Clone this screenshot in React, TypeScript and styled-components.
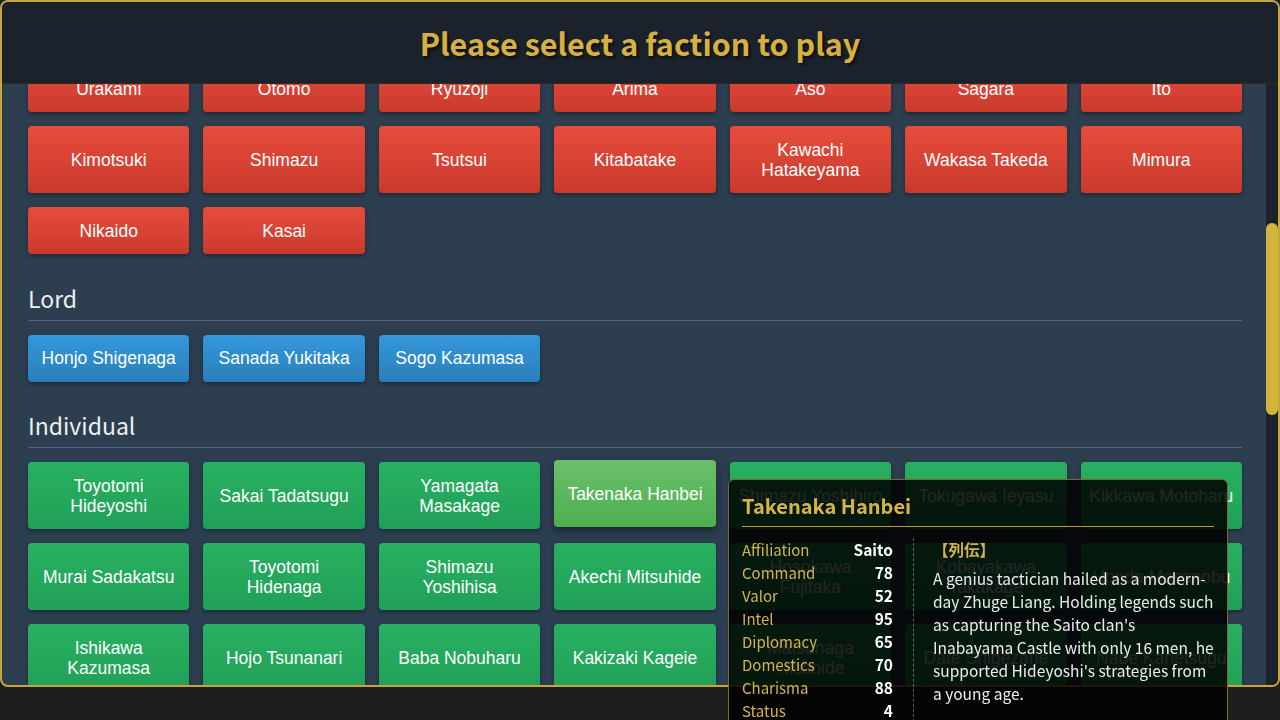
import React, { useLayoutEffect, useRef, useState } from "react";
import styled, { createGlobalStyle, css } from "styled-components";

type Tone = "red" | "blue" | "green";

const GlobalStyle = createGlobalStyle`
  html, body {
    margin: 0;
    padding: 0;
    height: 100%;
    overflow: hidden;
    background: #1f1e1d;
  }
  * {
    box-sizing: border-box;
  }
`;

const Frame = styled.div`
  height: 687px;
  display: flex;
  flex-direction: column;
  border: 2px solid #c9a63c;
  border-radius: 8px;
  overflow: hidden;
  background: #2c3e50;
`;

const Header = styled.header`
  height: 82px;
  flex-shrink: 0;
  display: flex;
  align-items: center;
  justify-content: center;
  background: #1b222c;
  border-bottom: 1px solid #2e2c22;
`;

const Title = styled.h1`
  margin: 2px 0 0;
  font: 700 30.5px/1 "Noto Sans CJK JP", "Noto Sans", sans-serif;
  color: #d6b13f;
  text-shadow: 2px 2px 3px rgba(0, 0, 0, 0.6);
`;

const Body = styled.div`
  flex: 1;
  min-height: 0;
  display: flex;
`;

const Scroller = styled.main`
  flex: 1;
  position: relative;
  overflow-y: auto;
  padding: 20px 24px 50px 26px;
  scrollbar-width: none;

  &::-webkit-scrollbar {
    display: none;
  }
`;

const Track = styled.div`
  width: 12px;
  flex-shrink: 0;
  background: #1b222c;
`;

const Thumb = styled.div`
  width: 12px;
  border-radius: 6px;
  background: #d4b53b;
`;

const Section = styled.section`
  & + & {
    margin-top: 27.5px;
  }
`;

const SectionTitle = styled.h2`
  margin: 0 0 14px;
  padding-bottom: 6px;
  border-bottom: 1px solid #566577;
  font: 400 23px/32px "Noto Sans CJK JP", "Noto Sans", sans-serif;
  color: #ecf0f1;
`;

const Grid = styled.div`
  display: grid;
  grid-template-columns: repeat(7, 1fr);
  gap: 14px;
`;

const tones = {
  red: css`
    background: linear-gradient(180deg, #e74c3c 0%, #c93a2c 100%);
  `,
  blue: css`
    background: linear-gradient(180deg, #3498db 0%, #2a7fba 100%);
  `,
  green: css`
    background: linear-gradient(180deg, #28b062 0%, #21a057 100%);
  `,
};

const FactionButton = styled.button<{ $tone: Tone; $active?: boolean }>`
  border: none;
  border-radius: 4px;
  padding: 13.5px 8px;
  font: 400 17.5px/20px "Liberation Sans", Arial, sans-serif;
  color: #ffffff;
  text-align: center;
  cursor: pointer;
  box-shadow: 0 2px 4px rgba(0, 0, 0, 0.35);
  ${(p) => tones[p.$tone]}
  ${(p) =>
    p.$active &&
    css`
      background: linear-gradient(180deg, #6cc06b 0%, #4caf50 100%);
      transform: translateY(-2px);
      box-shadow: 0 4px 8px rgba(0, 0, 0, 0.4);
    `}
`;

const Tip = styled.aside`
  position: fixed;
  left: 728px;
  top: 479px;
  width: 500px;
  padding: 12px 13px 16px;
  background: rgba(0, 0, 0, 0.86);
  border: 1px solid #7d6a2c;
  border-radius: 6px;
  font-family: "Noto Sans CJK JP", "Noto Sans", sans-serif;
  z-index: 10;
`;

const TipTitle = styled.div`
  font-size: 20px;
  line-height: 28px;
  font-weight: 700;
  color: #d8b443;
  padding-bottom: 6px;
  border-bottom: 1px solid #b8963a;
  margin-bottom: 11px;
`;

const TipBody = styled.div`
  display: flex;
`;

const Stats = styled.div`
  width: 172px;
  flex-shrink: 0;
  padding-right: 20px;
  border-right: 1px dashed rgba(255, 255, 255, 0.35);
`;

const StatRow = styled.div`
  display: flex;
  justify-content: space-between;
  font-size: 15px;
  line-height: 23px;
`;

const StatLabel = styled.span`
  color: #d4b44a;
`;

const StatValue = styled.span`
  color: #ffffff;
  font-weight: 700;
  font-size: 15.5px;
`;

const Bio = styled.div`
  flex: 1;
  padding-left: 19px;
`;

const BioHead = styled.div`
  font-size: 15.5px;
  line-height: 23px;
  font-weight: 700;
  color: #d4b44a;
`;

const BioText = styled.p`
  margin: 6px 0 0;
  font-size: 15.5px;
  line-height: 23px;
  color: #ececec;
`;

const sections: { title: string; tone: Tone; names: string[] }[] = [
  {
    title: "Daimyo",
    tone: "red",
    names: [
      "Oda", "Takeda", "Uesugi", "Hojo", "Imagawa", "Mori", "Chosokabe",
      "Date", "Mogami", "Satake", "Satomi", "Asakura", "Azai", "Miyoshi",
      "Ashikaga", "Hatano", "Akamatsu", "Amago", "Ouchi", "Noto Hatakeyama Clan", "Isshiki",
      "Saito", "Anegakoji", "Tokugawa", "Rokkaku", "Nanbu", "Ashina", "Soma",
      "Utsunomiya", "Nasu", "Yuki", "Bessho", "Yamana", "Yamashiro Hosokawa", "Kono",
      "Urakami", "Otomo", "Ryuzoji", "Arima", "Aso", "Sagara", "Ito",
      "Kimotsuki", "Shimazu", "Tsutsui", "Kitabatake", "Kawachi Hatakeyama", "Wakasa Takeda", "Mimura",
      "Nikaido", "Kasai",
    ],
  },
  {
    title: "Lord",
    tone: "blue",
    names: ["Honjo Shigenaga", "Sanada Yukitaka", "Sogo Kazumasa"],
  },
  {
    title: "Individual",
    tone: "green",
    names: [
      "Toyotomi Hideyoshi", "Sakai Tadatsugu", "Yamagata Masakage", "Takenaka Hanbei",
      "Shimazu Yoshihiro", "Tokugawa Ieyasu", "Kikkawa Motoharu",
      "Murai Sadakatsu", "Toyotomi Hidenaga", "Shimazu Yoshihisa", "Akechi Mitsuhide",
      "Hosokawa Fujitaka", "Kobayakawa Takakage", "Honda Masanobu",
      "Ishikawa Kazumasa", "Hojo Tsunanari", "Baba Nobuharu", "Kakizaki Kageie",
      "Matsunaga Hisahide", "Date Shigezane", "Naoe Kanetsugu",
      "Kato Kiyomasa", "Fukushima Masanori", "Ishida Mitsunari", "Otani Yoshitsugu",
      "Konishi Yukinaga", "Ukita Hideie", "Kuroda Kanbei",
      "Kuroda Nagamasa", "Hosokawa Tadaoki", "Ikeda Terumasa", "Asano Nagamasa",
      "Todo Takatora", "Katagiri Katsumoto", "Wakisaka Yasuharu",
      "Honda Tadakatsu", "Ii Naomasa", "Sakakibara Yasumasa", "Okubo Tadayo",
      "Torii Mototada", "Hattori Hanzo", "Amakasu Kagemochi",
      "Usami Sadamitsu", "Saito Toshimitsu", "Kosaka Masanobu", "Naito Masatoyo",
      "Yamamoto Kansuke", "Obata Toramasa", "Sanada Masayuki",
      "Sanada Nobuyuki", "Katakura Kojuro", "Oniniwa Tsunamoto", "Mogami Yoshiaki",
      "Chosokabe Motochika", "Tani Tadasumi", "Kosokabe Chikayasu",
      "Miyoshi Nagayoshi", "Shinohara Nagafusa", "Ashikaga Yoshiteru", "Hojo Ujiyasu",
      "Hojo Tsunashige", "Fuma Kotaro", "Imagawa Yoshimoto",
      "Taigen Sessai", "Asakura Soteki", "Azai Nagamasa", "Isono Kazumasa",
      "Endo Naotsune", "Mori Motonari", "Mori Terumoto",
      "Ankokuji Ekei", "Amago Tsunehisa", "Yamanaka Shikanosuke", "Otomo Sorin",
      "Tachibana Dosetsu", "Takahashi Joun", "Tachibana Muneshige",
      "Nabeshima Naoshige", "Shimazu Toshihisa", "Shimazu Iehisa", "Ijuin Tadamune",
      "Niiro Tadamoto", "Shibata Katsuie", "Niwa Nagahide",
      "Takigawa Kazumasu", "Sassa Narimasa", "Maeda Toshiie", "Maeda Keiji",
      "Gamo Ujisato", "Mori Nagayoshi", "Ikeda Tsuneoki",
    ],
  },
];

const stats: [string, string][] = [
  ["Affiliation", "Saito"],
  ["Command", "78"],
  ["Valor", "52"],
  ["Intel", "95"],
  ["Diplomacy", "65"],
  ["Domestics", "70"],
  ["Charisma", "88"],
  ["Status", "4"],
];

const HOVERED = "Takenaka Hanbei";
const ANCHOR = "Urakami";

export default function App() {
  const scrollRef = useRef<HTMLElement>(null);
  const [thumb, setThumb] = useState({ top: 0, height: 0 });

  const syncThumb = () => {
    const box = scrollRef.current;
    if (!box) return;
    const ratio = box.clientHeight / box.scrollHeight;
    setThumb({ top: box.scrollTop * ratio, height: box.clientHeight * ratio });
  };

  useLayoutEffect(() => {
    const box = scrollRef.current;
    if (!box) return;
    const anchor = box.querySelector<HTMLElement>("[data-anchor]");
    if (anchor) box.scrollTop = anchor.offsetTop + 19;
    syncThumb();
  }, []);

  return (
    <>
      <GlobalStyle />
      <Frame>
        <Header>
          <Title>Please select a faction to play</Title>
        </Header>
        <Body>
          <Scroller ref={scrollRef} onScroll={syncThumb}>
            {sections.map((section) => (
              <Section key={section.title}>
                <SectionTitle>{section.title}</SectionTitle>
                <Grid>
                  {section.names.map((name) => (
                    <FactionButton
                      key={name}
                      $tone={section.tone}
                      $active={name === HOVERED}
                      data-anchor={name === ANCHOR ? "" : undefined}
                    >
                      {name}
                    </FactionButton>
                  ))}
                </Grid>
              </Section>
            ))}
          </Scroller>
          <Track>
            <Thumb style={{ marginTop: thumb.top, height: thumb.height }} />
          </Track>
        </Body>
      </Frame>
      <Tip>
        <TipTitle>Takenaka Hanbei</TipTitle>
        <TipBody>
          <Stats>
            {stats.map(([label, value]) => (
              <StatRow key={label}>
                <StatLabel>{label}</StatLabel>
                <StatValue>{value}</StatValue>
              </StatRow>
            ))}
          </Stats>
          <Bio>
            <BioHead>【列伝】</BioHead>
            <BioText>
              A genius tactician hailed as a modern-day Zhuge Liang. Holding
              legends such as capturing the Saito clan's Inabayama Castle with
              only 16 men, he supported Hideyoshi's strategies from a young age.
            </BioText>
          </Bio>
        </TipBody>
      </Tip>
    </>
  );
}
